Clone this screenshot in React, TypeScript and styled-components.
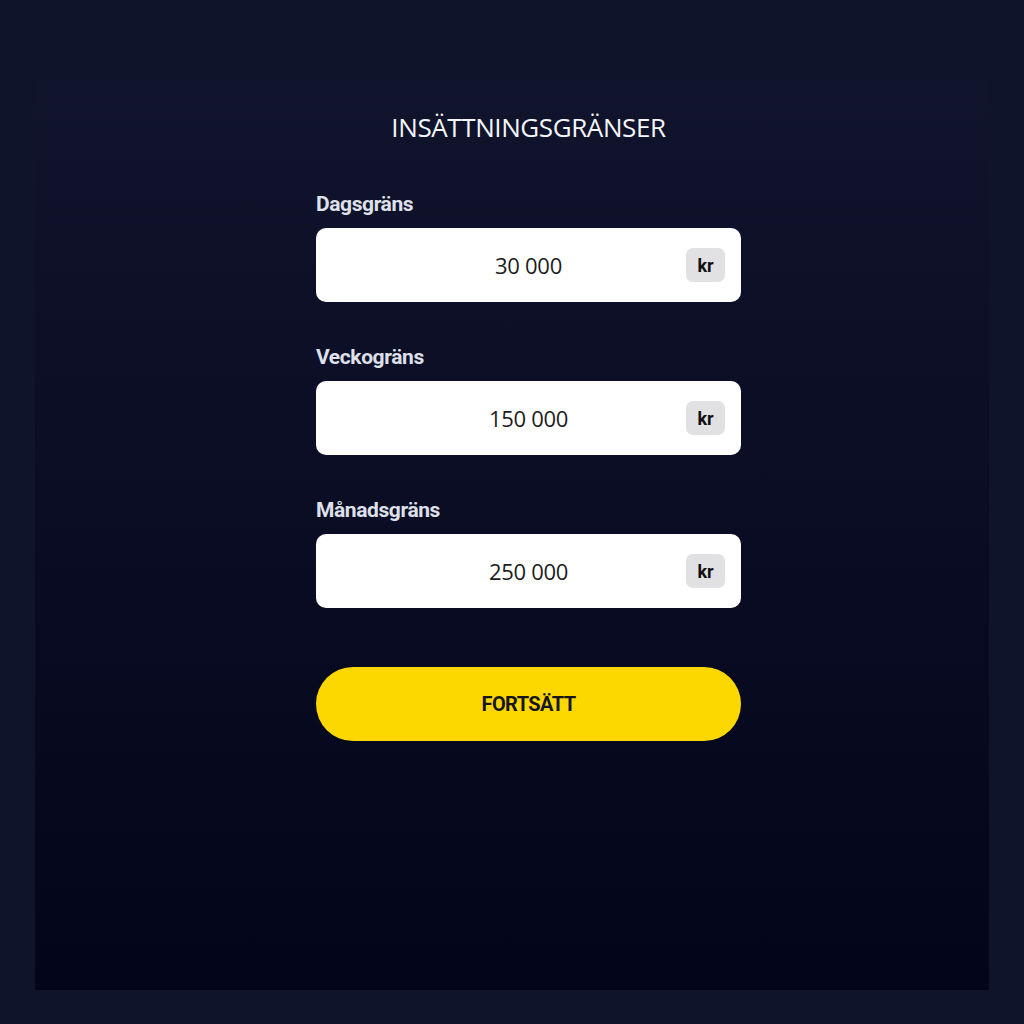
import React from 'react';
import styled, { createGlobalStyle } from 'styled-components';

const GlobalStyle = createGlobalStyle`
  html, body {
    margin: 0;
    padding: 0;
    background: #10142b;
  }
  * { box-sizing: border-box; }
`;

const Frame = styled.div`
  width: 1024px;
  height: 1024px;
  padding: 80px 35px 34px 35px;
  background: #10142b;
`;

const Panel = styled.div`
  height: 100%;
  padding: 33px 0 0 281px;
  background: linear-gradient(180deg, #10142c 0%, #0a0d24 45%, #03051a 100%);
`;

const Column = styled.div`
  width: 425px;
  display: flex;
  flex-direction: column;
`;

const Title = styled.h1`
  margin: 0 0 51px 0;
  text-align: center;
  font-family: 'Open Sans', sans-serif;
  font-weight: 500;
  font-size: 26px;
  line-height: 28px;
  letter-spacing: -0.4px;
  color: #f4f5fa;
`;

const Field = styled.div<{ $last?: boolean }>`
  display: flex;
  flex-direction: column;
  margin-bottom: ${(props) => (props.$last ? 59 : 43)}px;
`;

const Label = styled.label`
  font-family: 'Roboto', sans-serif;
  font-weight: 700;
  font-size: 21px;
  line-height: 24px;
  letter-spacing: -0.4px;
  color: #dfe0ea;
  margin-bottom: 12px;
`;

const InputBox = styled.div`
  position: relative;
  height: 74px;
  border-radius: 10px;
  background: #ffffff;
  display: flex;
  align-items: center;
  justify-content: center;
`;

const Value = styled.span`
  font-family: 'Open Sans', sans-serif;
  font-weight: 400;
  font-size: 22px;
  color: #1c1c22;
  letter-spacing: -0.3px;
`;

const Unit = styled.span`
  position: absolute;
  right: 16px;
  top: 20px;
  width: 39px;
  height: 34px;
  border-radius: 7px;
  background: #e1e1e3;
  display: flex;
  align-items: center;
  justify-content: center;
  font-family: 'Roboto', sans-serif;
  font-weight: 700;
  font-size: 18px;
  color: #111;
`;

const Button = styled.button`
  height: 74px;
  border: none;
  border-radius: 37px;
  background: #fdd800;
  font-family: 'Roboto', sans-serif;
  font-weight: 700;
  font-size: 20px;
  letter-spacing: -0.6px;
  color: #16161a;
  cursor: pointer;
`;

const limits = [
  { label: 'Dagsgräns', value: '30 000' },
  { label: 'Veckogräns', value: '150 000' },
  { label: 'Månadsgräns', value: '250 000' },
];

export default function App() {
  return (
    <>
      <GlobalStyle />
      <Frame>
        <Panel>
          <Column>
            <Title>INSÄTTNINGSGRÄNSER</Title>
            {limits.map((l, i) => (
              <Field key={l.label} $last={i === limits.length - 1}>
                <Label>{l.label}</Label>
                <InputBox>
                  <Value>{l.value}</Value>
                  <Unit>kr</Unit>
                </InputBox>
              </Field>
            ))}
            <Button>FORTSÄTT</Button>
          </Column>
        </Panel>
      </Frame>
    </>
  );
}
